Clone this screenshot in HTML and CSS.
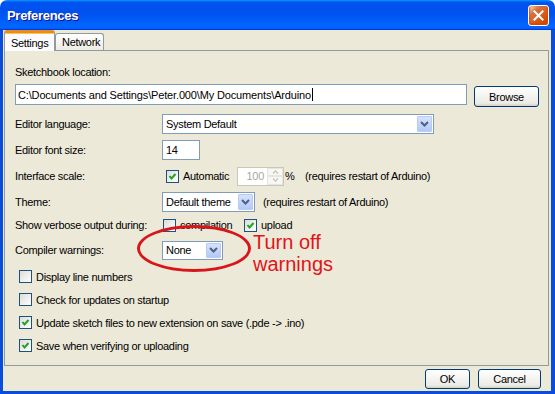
FILE: index.html
```html
<!DOCTYPE html>
<html lang="en">

<head>
    <meta charset="UTF-8">
    <meta name="viewport" content="width=device-width, initial-scale=1.0">
    <title>Preferences</title>

    <link rel="stylesheet" href="styles.css">
</head>

<body>

    <div class="window">
        <div class="titlebar">
            <span class="title">Preferences</span>
            <span class="close-btn">
                <svg width="11" height="11" viewBox="0 0 11 11">
                    <path d="M1.5 1.5 L9.5 9.5 M9.5 1.5 L1.5 9.5" stroke="#fff" stroke-width="2" stroke-linecap="square" />
                </svg>
            </span>
        </div>

        <div class="frame">
            <div class="tabs">
                <div class="tab active">Settings</div>
                <div class="tab">Network</div>
            </div>

            <div class="panel">
                <div class="row row-first">Sketchbook location:</div>

                <div class="row row-path">
                    <div class="field path">C:\Documents and Settings\Peter.000\My Documents\Arduino<span class="caret"></span></div>
                    <button class="btn browse">Browse</button>
                </div>

                <div class="row row-lang">
                    <span class="label">Editor language:</span>
                    <div class="select lang">
                        <span class="value">System Default</span>
                        <span class="arrow"><svg width="9" height="6" viewBox="0 0 9 6"><path d="M1 1 L4.5 4.5 L8 1" fill="none" stroke="#4d6185" stroke-width="2" /></svg></span>
                    </div>
                </div>

                <div class="row">
                    <span class="label">Editor font size:</span>
                    <div class="field size">14</div>
                </div>

                <div class="row">
                    <span class="label">Interface scale:</span>
                    <span class="opt auto">
                        <span class="check"><svg width="11" height="11" viewBox="0 0 11 11"><path d="M2.5 5 L4.5 7.5 L8.5 3" fill="none" stroke="#21a121" stroke-width="2" /></svg></span>
                        <span class="opt-text">Automatic</span>
                    </span>
                    <div class="spinner">
                        <span class="spin-value">100</span>
                        <span class="spin-arrows">
                            <span class="spin-btn"><svg width="7" height="4" viewBox="0 0 7 4"><path d="M1 3.5 L3.5 1 L6 3.5" fill="none" stroke="#c9c7ba" stroke-width="1.3" /></svg></span>
                            <span class="spin-btn"><svg width="7" height="4" viewBox="0 0 7 4"><path d="M1 0.5 L3.5 3 L6 0.5" fill="none" stroke="#c9c7ba" stroke-width="1.3" /></svg></span>
                        </span>
                    </div>
                    <span class="percent">%</span>
                    <span class="note">(requires restart of Arduino)</span>
                </div>

                <div class="row">
                    <span class="label">Theme:</span>
                    <div class="select theme">
                        <span class="value">Default theme</span>
                        <span class="arrow"><svg width="9" height="6" viewBox="0 0 9 6"><path d="M1 1 L4.5 4.5 L8 1" fill="none" stroke="#4d6185" stroke-width="2" /></svg></span>
                    </div>
                    <span class="note theme-note">(requires restart of Arduino)</span>
                </div>

                <div class="row row-verbose">
                    <span class="label">Show verbose output during:</span>
                    <span class="opt compile">
                        <span class="check"></span>
                        <span class="opt-text">compilation</span>
                    </span>
                    <span class="opt">
                        <span class="check"><svg width="11" height="11" viewBox="0 0 11 11"><path d="M2.5 5 L4.5 7.5 L8.5 3" fill="none" stroke="#21a121" stroke-width="2" /></svg></span>
                        <span class="opt-text">upload</span>
                    </span>
                </div>

                <div class="row row-compiler">
                    <span class="label">Compiler warnings:</span>
                    <div class="select warn">
                        <span class="value">None</span>
                        <span class="arrow"><svg width="9" height="6" viewBox="0 0 9 6"><path d="M1 1 L4.5 4.5 L8 1" fill="none" stroke="#4d6185" stroke-width="2" /></svg></span>
                    </div>
                    <!-- hand drawn note on top of the dialog -->
                    <span class="circle"></span>
                    <span class="annotation">
                        <span class="note-line">Turn off</span>
                        <span class="note-line">warnings</span>
                    </span>
                </div>

                <div class="checks">
                    <div class="check-row">
                        <span class="check"></span>
                        <span class="opt-text">Display line numbers</span>
                    </div>
                    <div class="check-row">
                        <span class="check"></span>
                        <span class="opt-text">Check for updates on startup</span>
                    </div>
                    <div class="check-row">
                        <span class="check"><svg width="11" height="11" viewBox="0 0 11 11"><path d="M2.5 5 L4.5 7.5 L8.5 3" fill="none" stroke="#21a121" stroke-width="2" /></svg></span>
                        <span class="opt-text">Update sketch files to new extension on save (.pde -&gt; .ino)</span>
                    </div>
                    <div class="check-row">
                        <span class="check"><svg width="11" height="11" viewBox="0 0 11 11"><path d="M2.5 5 L4.5 7.5 L8.5 3" fill="none" stroke="#21a121" stroke-width="2" /></svg></span>
                        <span class="opt-text">Save when verifying or uploading</span>
                    </div>
                </div>
            </div>

            <div class="footer">
                <button class="btn ok">OK</button>
                <button class="btn cancel">Cancel</button>
            </div>
        </div>
    </div>

</body>

</html>
```

FILE: styles.css
```css
* {
    box-sizing: border-box;
}

body {
    margin: 0;
    font-family: "Liberation Sans", Arial, sans-serif;
    font-size: 11px;
    letter-spacing: -0.3px;
    color: #000;
    background: #fff;
}

.window {
    width: 555px;
    height: 394px;
    display: flex;
    flex-direction: column;
}

/* title bar */
.titlebar {
    height: 30px;
    display: flex;
    align-items: center;
    justify-content: space-between;
    padding: 0 6px 0 7px;
    background: linear-gradient(180deg, #0997ff, #0053ee 8%, #0050ee 40%, #06f 88%, #06f 93%, #005bff 95%, #003dd7 96%, #003dd7);
    border-radius: 7px 7px 0 0;
}

.title {
    color: #fff;
    font-weight: bold;
    font-size: 13px;
    letter-spacing: -0.3px;
    text-shadow: 1px 1px #0f1089;
}

.close-btn {
    width: 21px;
    height: 21px;
    display: flex;
    align-items: center;
    justify-content: center;
    border: 1px solid #fff;
    border-radius: 3px;
    background: radial-gradient(circle at 90% 90%, #cc4600 0, #dc6527 55%, #cd7546 70%, #ffccb2 90%, #fff 100%);
    box-shadow: inset 0 -1px 2px 1px #da4600;
}

/* window body */
.frame {
    flex: 1;
    display: flex;
    flex-direction: column;
    background: #ece9d8;
    border: solid #0b4ddb;
    border-width: 0 4px 3px 3px;
}

.tabs {
    height: 20px;
    display: flex;
    align-items: flex-end;
    margin-left: 1px;
}

.tab {
    height: 17px;
    padding: 2px 0 0 6px;
    width: 49px;
    border: 1px solid #919b9c;
    border-bottom: none;
    border-radius: 3px 3px 0 0;
    background: linear-gradient(#fff, #f3f2ec 70%, #ecebe6);
}

.tab.active {
    width: 51px;
    height: 21px;
    margin-bottom: -1px;
    padding: 4px 0 0 6px;
    position: relative;
    z-index: 1;
    background: #fcfcfe;
    border-top: 3px solid #e68b2c;
    box-shadow: inset 0 1px #ffc83c;
}

.panel {
    height: 316px;
    margin: 0 2px 0 1px;
    padding-left: 10px;
    border: 1px solid #919b9c;
    background: #ece9d8;
}

.row {
    height: 20px;
    display: flex;
    align-items: center;
    margin-top: 6px;
    position: relative;
}

.row-first {
    margin-top: 11px;
}

.row-path {
    height: 23px;
    margin-top: 2px;
    align-items: flex-start;
}

.row-lang {
    margin-top: 7px;
}

.row-verbose {
    margin-top: 3px;
}

.row-compiler {
    margin-top: 5px;
}

.label {
    width: 147px;
    flex-shrink: 0;
}

/* inputs */
.field {
    height: 21px;
    display: flex;
    align-items: center;
    border: 1px solid #7f9db9;
    background: #fff;
    padding-left: 2px;
}

.path {
    width: 452px;
    letter-spacing: -0.15px;
}

.caret {
    display: inline-block;
    width: 1px;
    height: 13px;
    background: #000;
    margin-left: 1px;
}

.size {
    width: 38px;
    height: 20px;
    padding-left: 3px;
}

.select {
    height: 20px;
    display: flex;
    align-items: center;
    justify-content: space-between;
    border: 1px solid #7f9db9;
    background: #fff;
    padding: 1px;
}

.select .value {
    padding-left: 2px;
}

.arrow {
    width: 15px;
    height: 100%;
    display: flex;
    align-items: center;
    justify-content: center;
    border: 1px solid #b9cbf3;
    border-radius: 1px;
    background: linear-gradient(#d6e2fd, #b4c8f6);
}

.lang {
    width: 272px;
}

.theme {
    width: 93px;
}

.warn {
    width: 61px;
    height: 19px;
}

.spinner {
    width: 47px;
    height: 19px;
    display: flex;
    align-items: center;
    justify-content: flex-end;
    border: 1px solid #c9c7ba;
    background: #fff;
}

.spin-value {
    color: #aca899;
    margin-right: 3px;
}

.spin-arrows {
    width: 16px;
    height: 100%;
    display: flex;
    flex-direction: column;
}

.spin-btn {
    flex: 1;
    display: flex;
    align-items: center;
    justify-content: center;
    background: #f7f7f4;
    border: 1px solid #e8e6dc;
}

.percent {
    width: 21px;
    padding-left: 1px;
}

.theme-note {
    margin-left: 8px;
}

/* checkboxes */
.opt {
    display: flex;
    align-items: center;
}

.auto {
    width: 75px;
    padding-left: 4px;
}

.compile {
    width: 82px;
    padding-left: 1px;
}

.check {
    width: 13px;
    height: 13px;
    flex-shrink: 0;
    border: 1px solid #1c5180;
    background: linear-gradient(135deg, #dcdcd7, #fff);
}

.check svg {
    display: block;
}

.opt-text {
    margin-left: 4px;
}

.checks {
    margin-top: 5px;
}

.check-row {
    height: 23px;
    display: flex;
    align-items: center;
    padding-left: 4px;
}

/* red marker note */
.circle {
    position: absolute;
    left: 122px;
    top: -15px;
    width: 114px;
    height: 47px;
    border: 3px solid #d8151a;
    border-radius: 50%;
}

.annotation {
    position: absolute;
    left: 238px;
    top: -6px;
    font-size: 20px;
    letter-spacing: 0;
    color: #e0141a;
    white-space: nowrap;
}

.note-line {
    display: block;
    line-height: 17px;
}

.note-line + .note-line {
    margin-top: 5px;
}

/* buttons */
.btn {
    height: 21px;
    font-family: inherit;
    font-size: 11px;
    letter-spacing: -0.3px;
    color: #000;
    border: 1px solid #003c74;
    border-radius: 3px;
    background: linear-gradient(#fff, #ecebe6 85%, #d6d0c5);
    padding: 0;
}

.browse {
    width: 65px;
    margin: 2px 0 0 7px;
}

.footer {
    flex: 1;
    display: flex;
    justify-content: flex-end;
    gap: 8px;
    padding: 3px 10px 0 0;
}

.ok {
    width: 45px;
    height: 20px;
}

.cancel {
    width: 63px;
    height: 20px;
}
```
